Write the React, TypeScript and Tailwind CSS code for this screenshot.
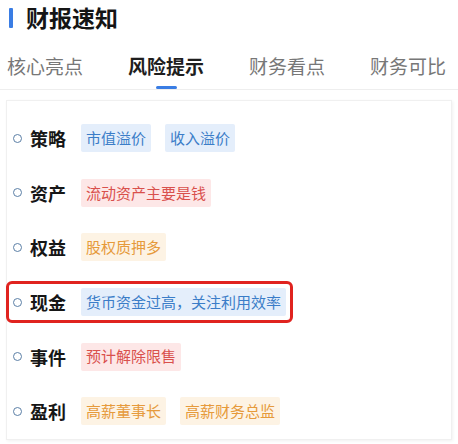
import React from 'react'

type Tone = 'blue' | 'red' | 'orange'

const toneClass: Record<Tone, string> = {
  blue: 'bg-[#e4eefb] text-[#3b7dc8]',
  red: 'bg-[#fde7e7] text-[#d9504c]',
  orange: 'bg-[#fdf3e4] text-[#e69a3b]',
}

const rows: { label: string; tone: Tone; tags: string[]; marked?: boolean }[] = [
  { label: '策略', tone: 'blue', tags: ['市值溢价', '收入溢价'] },
  { label: '资产', tone: 'red', tags: ['流动资产主要是钱'] },
  { label: '权益', tone: 'orange', tags: ['股权质押多'] },
  { label: '现金', tone: 'blue', tags: ['货币资金过高，关注利用效率'], marked: true },
  { label: '事件', tone: 'red', tags: ['预计解除限售'] },
  { label: '盈利', tone: 'orange', tags: ['高薪董事长', '高薪财务总监'] },
]

const tabs = ['核心亮点', '风险提示', '财务看点', '财务可比']

const App = () => {
  return (
    <div className="w-[458px] h-[444px] overflow-hidden bg-white font-['Noto_Sans_CJK_SC',sans-serif]">
      {/* header */}
      <div className="flex items-center h-[34px] pt-[1px]">
        <div className="ml-[9px] w-[4px] h-[20px] bg-[#3a7de4] rounded-[1px]" />
        <div className="ml-[13px] text-[23px] font-bold text-[#151515] leading-none">财报速知</div>
      </div>

      {/* tabs */}
      <div className="relative mt-[17px] h-[39px] border-b border-[#eeeeee] flex gap-[45px] pl-[7px] whitespace-nowrap">
        {tabs.map((t, i) => (
          <div
            key={t}
            className={
              'relative text-[19px] leading-[30px] ' +
              (i === 1 ? 'font-bold text-[#1e1e1e]' : 'text-[#777777]')
            }
          >
            {t}
            {i === 1 && (
              <div className="absolute left-[28px] top-[35px] w-[21px] h-[3px] bg-[#3a7de4] rounded-full" />
            )}
          </div>
        ))}
      </div>

      {/* card */}
      <div className="mt-[10px] mx-[6px] border border-[#f0f0f0] shadow-[1px_1px_3px_rgba(0,0,0,0.06)] pt-[10px] pl-[6px]">
        {rows.map((r) => (
          <div key={r.label} className="relative flex items-center h-[54.6px]">
            <div className="w-[9px] h-[9px] rounded-full border-[1.5px] border-[#5b7fa6]" />
            <div className="ml-[8px] text-[18px] font-bold text-[#161616] leading-none">{r.label}</div>
            <div className="ml-[15px] flex gap-[14px]">
              {r.tags.map((tag) => (
                <div
                  key={tag}
                  className={'h-[28px] px-[5px] flex items-center text-[15px] rounded-[2px] ' + toneClass[r.tone]}
                >
                  {tag}
                </div>
              ))}
            </div>
            {r.marked && (
              <div className="absolute left-[-7px] top-[6px] w-[287px] h-[42px] border-[3px] border-[#e0231f] rounded-[6px]" />
            )}
          </div>
        ))}
      </div>
    </div>
  )
}

export default App
